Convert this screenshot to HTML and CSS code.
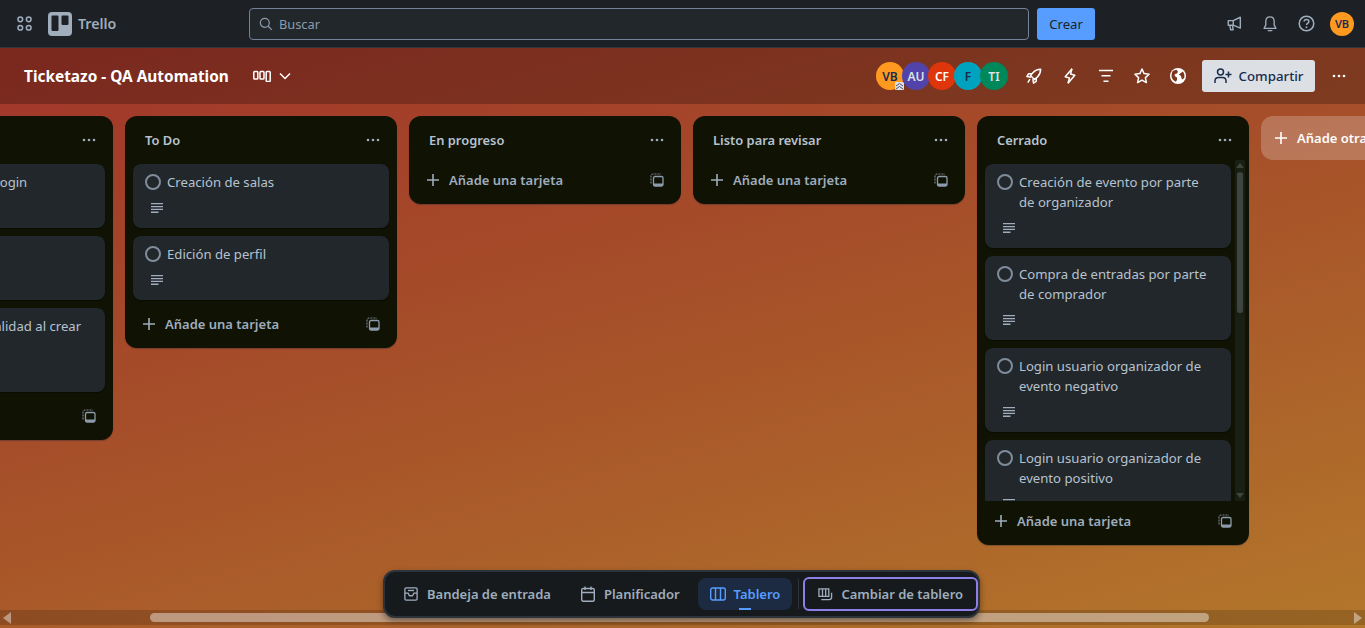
FILE: index.html
```html
<!DOCTYPE html>
<html lang="es">

<head>
    <meta charset="UTF-8">
    <meta name="viewport" content="width=device-width, initial-scale=1.0">
    <title>Ticketazo - QA Automation | Trello</title>
    <link rel="stylesheet" href="styles.css">
</head>

<body>
    <svg class="icon-defs" width="0" height="0" aria-hidden="true">
        <symbol id="i-desc" viewBox="0 0 12 10">
            <path d="M0 .6h12M0 3.6h12M0 6.4h12M0 9.2h7.500" fill="none" stroke="currentColor" stroke-width="1.400" />
        </symbol>
        <symbol id="i-dots" viewBox="0 0 14 4">
            <circle cx="2" cy="2" r="1.300" fill="currentColor" />
            <circle cx="7" cy="2" r="1.300" fill="currentColor" />
            <circle cx="12" cy="2" r="1.300" fill="currentColor" />
        </symbol>
        <symbol id="i-plus" viewBox="0 0 12 12">
            <path d="M6 0v12M0 6h12" fill="none" stroke="currentColor" stroke-width="1.600" />
        </symbol>
        <symbol id="i-template" viewBox="0 0 14 14">
            <path d="M1 10.500V3.200C1 2 1.800 1 3 1h8" fill="none" stroke="currentColor" stroke-width="1.200" stroke-dasharray="2 1" opacity=".8" />
            <rect x="3.500" y="3.500" width="9.500" height="9.500" rx="1.500" fill="none" stroke="currentColor" stroke-width="1.300" />
            <path d="M3.500 10.500h9.500v2.500h-9.500z" fill="currentColor" />
        </symbol>
    </svg>

    <header class="topbar">
        <div class="topbar-left">
            <button class="icon-btn">
                <svg width="15" height="15" viewBox="0 0 16 16" fill="none" stroke="currentColor" stroke-width="1.600">
                    <circle cx="3.500" cy="3.500" r="2.500" />
                    <circle cx="12.500" cy="3.500" r="2.500" />
                    <circle cx="3.500" cy="12.500" r="2.500" />
                    <circle cx="12.500" cy="12.500" r="2.500" />
                </svg>
            </button>
            <svg class="trello-mark" width="24" height="24" viewBox="0 0 24 24">
                <rect width="24" height="24" rx="4" fill="#9fadbc" />
                <rect x="3.500" y="3.500" width="7" height="15.500" rx="1.200" fill="#1d2125" />
                <rect x="13.500" y="3.500" width="7" height="9.500" rx="1.200" fill="#1d2125" />
            </svg>
            <span class="trello-name">Trello</span>
        </div>
        <div class="search">
            <svg width="14" height="14" viewBox="0 0 14 14" fill="none" stroke="currentColor" stroke-width="1.200">
                <circle cx="5.800" cy="5.800" r="4.500" />
                <path d="M9 9l3.800 3.800" />
            </svg>
            <span>Buscar</span>
        </div>
        <button class="create-btn">Crear</button>
        <div class="topbar-right">
            <button class="icon-btn">
                <svg width="15" height="15" viewBox="0 0 18 18" fill="none" stroke="currentColor" stroke-width="1.700" stroke-linejoin="round">
                    <path d="M1.500 5.500h6L16 1.500v13l-8.500-3.500h-6z" />
                    <path d="M3.500 11l.8 5.500h3L6.700 11" />
                    <path d="M7.500 5.500v5.500" />
                </svg>
            </button>
            <button class="icon-btn">
                <svg width="16" height="16" viewBox="0 0 18 18" fill="none" stroke="currentColor" stroke-width="1.500" stroke-linejoin="round">
                    <path d="M9 1c-3 0-4.700 2.300-4.700 5v4L2.300 14h13.400l-2-4V6c0-2.700-1.700-5-4.700-5z" />
                    <path d="M7 16.500h4" stroke-linecap="round" />
                </svg>
            </button>
            <button class="icon-btn">
                <svg width="17" height="17" viewBox="0 0 18 18" fill="none" stroke="currentColor" stroke-width="1.600">
                    <circle cx="9" cy="9" r="7.700" />
                    <path d="M6.500 7c0-1.500 1.100-2.300 2.500-2.300s2.500.8 2.500 2.200c0 1.900-2.500 1.800-2.500 3.600" />
                    <circle cx="9" cy="13" r="1" fill="currentColor" stroke="none" />
                </svg>
            </button>
            <div class="icon-btn">
                <span class="me-avatar">VB</span>
            </div>
        </div>
    </header>

    <div class="board">
        <div class="board-header">
            <h1 class="board-title">Ticketazo - QA Automation</h1>
            <svg class="view-icon" width="18" height="12" viewBox="0 0 18 12" fill="none" stroke="#fff" stroke-width="1.500">
                <rect x=".8" y="1.500" width="4" height="7.500" rx=".8" />
                <rect x="7" y="1.500" width="4" height="7.500" rx=".8" />
                <rect x="13.200" y="1.500" width="4" height="10" rx=".8" />
            </svg>
            <svg class="view-chevron" width="12" height="8" viewBox="0 0 12 8" fill="none" stroke="#fff" stroke-width="1.500">
                <path d="M1 1.500l5 5 5-5" />
            </svg>

            <div class="members">
                <span class="member member-vb">VB
                    <svg class="admin-badge" width="9" height="8" viewBox="0 0 9 8" fill="none" stroke="#44546f" stroke-width="1">
                        <rect width="9" height="8" rx="1" fill="#dfe1e6" stroke="none" />
                        <path d="M1 4l3.500-2.500L8 4M1 7l3.500-2.500L8 7" />
                    </svg>
                </span>
                <span class="member member-au">AU</span>
                <span class="member member-cf">CF</span>
                <span class="member member-f">F</span>
                <span class="member member-ti">TI</span>
            </div>

            <button class="icon-btn header-btn">
                <svg width="16" height="16" viewBox="0 0 18 18" fill="none" stroke="currentColor" stroke-width="1.700" stroke-linejoin="round">
                    <path d="M16.500 1.500c-4 .2-6.500 1.300-8.500 3.500L5 8.500l4.500 4.500 3.500-3c2.200-2 3.300-4.500 3.500-8.500z" />
                    <path d="M6.500 6.500H3L1 9.500l4.500.8" />
                    <path d="M11.500 11.500V15L8.500 17l-.8-4.500" />
                    <path d="M4.500 12.500L2 16.500" />
                </svg>
            </button>
            <button class="icon-btn header-btn">
                <svg width="12" height="16" viewBox="0 0 12 16" fill="none" stroke="currentColor" stroke-width="1.500" stroke-linejoin="round">
                    <path d="M8 .8L1.200 8.800l4.300 1.200L4 15.200" />
                    <path d="M4 15.200l6.800-8L6.500 6 8 .8" />
                </svg>
            </button>
            <button class="icon-btn header-btn">
                <svg width="16" height="14" viewBox="0 0 16 14" fill="none" stroke="currentColor" stroke-width="1.600">
                    <path d="M1 1.500h14M3.500 6.800h9M5.500 12.200h5" />
                </svg>
            </button>
            <button class="icon-btn header-btn">
                <svg width="18" height="18" viewBox="0 0 18 18" fill="none" stroke="currentColor" stroke-width="1.500" stroke-linejoin="round">
                    <path d="M9 2l2.100 4.600 5 .6-3.700 3.400 1 5L9 13.100l-4.400 2.500 1-5-3.700-3.400 5-.6z" />
                </svg>
            </button>
            <button class="icon-btn header-btn">
                <svg width="16" height="16" viewBox="0 0 16 16">
                    <circle cx="8" cy="8" r="8" fill="#fff" />
                    <path d="M3 2.800l3.500-1 1.500 2-1 1.800-2 .5-.4 2 2.400 1.400v2.500l-1.200 1.700C3.500 12.700 1.600 10.500 1.500 8 1.500 6 2 4.200 3 2.800zM10 5.500l3-2 1.200 2.500.3 3-1.500 2.500-1.500-1-.5-2.500-2-1.200z" fill="#7c3620" />
                </svg>
            </button>
            <button class="share-btn">
                <svg width="18" height="16" viewBox="0 0 18 16" fill="none" stroke="currentColor" stroke-width="1.500">
                    <circle cx="6.500" cy="4" r="3" />
                    <path d="M1 15v-2c0-2 1.500-3.500 3.500-3.500h4c2 0 3.500 1.500 3.500 3.500v2" />
                    <path d="M14.500 3.500v6M11.500 6.500h6" />
                </svg>
                Compartir
            </button>
            <button class="icon-btn header-btn">
                <svg width="14" height="4" fill="currentColor">
                    <use href="#i-dots" />
                </svg>
            </button>
        </div>

        <main class="canvas">
            <div class="lists">
                <section class="list">
                    <div class="list-head">
                        <h2>Backlog</h2>
                        <svg class="list-dots" width="14" height="4"><use href="#i-dots" /></svg>
                    </div>
                    <div class="cards">
                        <article class="card">
                            <div class="card-row"><span class="check"></span><p>Comprobación de login</p></div>
                            <div class="card-meta"><svg width="12" height="10"><use href="#i-desc" /></svg></div>
                        </article>
                        <article class="card">
                            <div class="card-row"><span class="check"></span><p>Logout</p></div>
                            <div class="card-meta"><svg width="12" height="10"><use href="#i-desc" /></svg></div>
                        </article>
                        <article class="card">
                            <div class="card-row"><span class="check"></span><p>Verificación de localidad al crear evento</p></div>
                            <div class="card-meta"><svg width="12" height="10"><use href="#i-desc" /></svg></div>
                        </article>
                    </div>
                    <div class="list-foot">
                        <svg class="foot-plus" width="12" height="12"><use href="#i-plus" /></svg>
                        <span>Añade una tarjeta</span>
                        <svg class="foot-template" width="14" height="14"><use href="#i-template" /></svg>
                    </div>
                </section>

                <section class="list">
                    <div class="list-head">
                        <h2>To Do</h2>
                        <svg class="list-dots" width="14" height="4"><use href="#i-dots" /></svg>
                    </div>
                    <div class="cards">
                        <article class="card">
                            <div class="card-row"><span class="check"></span><p>Creación de salas</p></div>
                            <div class="card-meta"><svg width="12" height="10"><use href="#i-desc" /></svg></div>
                        </article>
                        <article class="card">
                            <div class="card-row"><span class="check"></span><p>Edición de perfil</p></div>
                            <div class="card-meta"><svg width="12" height="10"><use href="#i-desc" /></svg></div>
                        </article>
                    </div>
                    <div class="list-foot">
                        <svg class="foot-plus" width="12" height="12"><use href="#i-plus" /></svg>
                        <span>Añade una tarjeta</span>
                        <svg class="foot-template" width="14" height="14"><use href="#i-template" /></svg>
                    </div>
                </section>

                <section class="list">
                    <div class="list-head">
                        <h2>En progreso</h2>
                        <svg class="list-dots" width="14" height="4"><use href="#i-dots" /></svg>
                    </div>
                    <div class="list-foot list-foot-tight">
                        <svg class="foot-plus" width="12" height="12"><use href="#i-plus" /></svg>
                        <span>Añade una tarjeta</span>
                        <svg class="foot-template" width="14" height="14"><use href="#i-template" /></svg>
                    </div>
                </section>

                <section class="list">
                    <div class="list-head">
                        <h2>Listo para revisar</h2>
                        <svg class="list-dots" width="14" height="4"><use href="#i-dots" /></svg>
                    </div>
                    <div class="list-foot list-foot-tight">
                        <svg class="foot-plus" width="12" height="12"><use href="#i-plus" /></svg>
                        <span>Añade una tarjeta</span>
                        <svg class="foot-template" width="14" height="14"><use href="#i-template" /></svg>
                    </div>
                </section>

                <section class="list">
                    <div class="list-head">
                        <h2>Cerrado</h2>
                        <svg class="list-dots" width="14" height="4"><use href="#i-dots" /></svg>
                    </div>
                    <div class="scroll-wrap">
                        <div class="cards cards-scroll">
                            <article class="card">
                                <div class="card-row"><span class="check"></span><p>Creación de evento por parte de organizador</p></div>
                                <div class="card-meta"><svg width="12" height="10"><use href="#i-desc" /></svg></div>
                            </article>
                            <article class="card">
                                <div class="card-row"><span class="check"></span><p>Compra de entradas por parte de comprador</p></div>
                                <div class="card-meta"><svg width="12" height="10"><use href="#i-desc" /></svg></div>
                            </article>
                            <article class="card">
                                <div class="card-row"><span class="check"></span><p>Login usuario organizador de evento negativo</p></div>
                                <div class="card-meta"><svg width="12" height="10"><use href="#i-desc" /></svg></div>
                            </article>
                            <article class="card">
                                <div class="card-row"><span class="check"></span><p>Login usuario organizador de evento positivo</p></div>
                                <div class="card-meta"><svg width="12" height="10"><use href="#i-desc" /></svg></div>
                            </article>
                        </div>
                        <div class="list-scrollbar">
                            <span class="arrow-up"></span>
                            <span class="list-thumb"></span>
                            <span class="arrow-down"></span>
                        </div>
                    </div>
                    <div class="list-foot list-foot-tight">
                        <svg class="foot-plus" width="12" height="12"><use href="#i-plus" /></svg>
                        <span>Añade una tarjeta</span>
                        <svg class="foot-template" width="14" height="14"><use href="#i-template" /></svg>
                    </div>
                </section>

                <div class="add-list">
                    <svg width="12" height="12"><use href="#i-plus" /></svg>
                    <span>Añade otra lista</span>
                </div>
            </div>

            <div class="page-scrollbar">
                <span class="arrow-left"></span>
                <span class="page-thumb"></span>
                <span class="arrow-right"></span>
            </div>

            <nav class="dock">
                <a class="dock-item">
                    <svg width="14" height="14" viewBox="0 0 16 16" fill="none" stroke="currentColor" stroke-width="1.500" stroke-linejoin="round">
                        <rect x="1" y="1" width="14" height="14" rx="1.500" />
                        <path d="M1 7h3.700l1.500 3h3.600l1.500-3H15" />
                        <path d="M4.500 4h7" />
                    </svg>
                    Bandeja de entrada
                </a>
                <a class="dock-item">
                    <svg width="14" height="16" viewBox="0 0 14 16" fill="none" stroke="currentColor" stroke-width="1.400">
                        <rect x=".7" y="2.500" width="12.600" height="12.800" rx="1.500" />
                        <path d="M.7 6.500h12.600M4 .5v3.500M10 .5v3.500" />
                    </svg>
                    Planificador
                </a>
                <a class="dock-item dock-active">
                    <svg width="16" height="14" viewBox="0 0 16 14" fill="none" stroke="currentColor" stroke-width="1.400">
                        <rect x=".7" y="1" width="14.600" height="12" rx="2" />
                        <path d="M5.500 1v12M10.500 1v12" />
                    </svg>
                    Tablero
                </a>
                <span class="dock-sep"></span>
                <a class="dock-item dock-switch">
                    <svg width="15" height="15" viewBox="0 0 16 16" fill="none" stroke="currentColor" stroke-width="1.400">
                        <path d="M1 2h10.500v8H1zM4.800 2v8M8.200 2v8" />
                        <path d="M14.500 6v5c0 1.500-1 2.500-2.500 2.500H3.500" />
                    </svg>
                    Cambiar de tablero
                </a>
            </nav>
        </main>
    </div>
</body>

</html>
```
FILE: styles.css
```css
* {
    box-sizing: border-box;
}

html,
body {
    height: 100%;
}

body {
    margin: 0;
    display: flex;
    flex-direction: column;
    overflow: hidden;
    font-family: "Noto Sans", "Open Sans", sans-serif;
    font-size: 13.15px;
    color: #b6c2cf;
    background-color: #1d2125;
}

h1,
h2,
p {
    margin: 0;
}

button {
    font-family: inherit;
    border: none;
    cursor: pointer;
}

.icon-defs {
    position: absolute;
}

.icon-btn {
    flex: 0 0 32px;
    height: 32px;
    padding: 0;
    display: flex;
    align-items: center;
    justify-content: center;
    background: none;
    color: #9fadbc;
}

/* top bar */
.topbar {
    flex: 0 0 48px;
    display: flex;
    align-items: center;
    padding: 0 7px 0 8px;
    background-color: #1d2125;
    border-bottom: 1px solid #31383d;
}

.topbar-left {
    flex: 0 0 241px;
    display: flex;
    align-items: center;
}

.trello-mark {
    margin-left: 8px;
}

.trello-name {
    margin-left: 6px;
    font-size: 14.2px;
    font-weight: 600;
    color: #9fadbc;
}

.search {
    flex: 1;
    height: 32px;
    display: flex;
    align-items: center;
    gap: 6px;
    padding: 1px 9px 0;
    font-size: 12.8px;
    color: #8c9bab;
    background-color: #22272b;
    border: 1px solid #738496;
    border-radius: 4px;
}

.create-btn {
    flex: 0 0 58px;
    height: 32px;
    margin-left: 8px;
    font-size: 13.15px;
    color: #1d2125;
    background-color: #579dff;
    border-radius: 3px;
}

.topbar-right {
    display: flex;
    align-items: center;
    gap: 4px;
    margin-left: 123px;
}

.me-avatar {
    width: 24px;
    height: 24px;
    display: flex;
    align-items: center;
    justify-content: center;
    font-size: 11px;
    font-weight: 600;
    color: #172b4d;
    background-color: #ff991f;
    border-radius: 50%;
}

/* board */
.board {
    flex: 1;
    min-height: 0;
    display: flex;
    flex-direction: column;
    background: linear-gradient(165deg, #a2352a 0%, #a64f29 45%, #b3772b 100%);
}

.board-header {
    flex: 0 0 56px;
    display: flex;
    align-items: center;
    gap: 4px;
    padding: 0 10px 0 24px;
    background-color: rgba(0, 0, 0, 0.24);
}

.board-title {
    font-size: 15.4px;
    font-weight: 700;
    color: #fff;
}

.view-icon {
    margin-left: 20px;
}

.view-chevron {
    margin-left: 4px;
}

.members {
    display: flex;
    margin-left: auto;
    margin-right: 6px;
}

.member {
    position: relative;
    width: 28px;
    height: 28px;
    margin-left: -2px;
    display: flex;
    align-items: center;
    justify-content: center;
    font-size: 12px;
    font-weight: 600;
    border-radius: 50%;
}

.member-vb {
    color: #172b4d;
    background-color: #ff991f;
}

.member-au {
    color: #dfe1e6;
    background-color: #5243aa;
}

.member-cf {
    color: #fff;
    background-color: #de350b;
}

.member-f {
    color: #172b4d;
    background-color: #00a3bf;
}

.member-ti {
    color: #dfe1e6;
    background-color: #00875a;
}

.admin-badge {
    position: absolute;
    right: 0;
    bottom: 0;
}

.header-btn {
    color: #fff;
}

.share-btn {
    flex: 0 0 113px;
    height: 32px;
    margin: 0 4px;
    display: flex;
    align-items: center;
    justify-content: center;
    gap: 7px;
    font-size: 13.3px;
    font-weight: 500;
    color: #172b4d;
    background-color: #dcdfe4;
    border-radius: 3px;
}

/* lists */
.canvas {
    position: relative;
    flex: 1;
    min-height: 0;
    display: flex;
    flex-direction: column;
    overflow: hidden;
}

.lists {
    flex: 1;
    min-height: 0;
    display: flex;
    align-items: flex-start;
    gap: 12px;
    margin-top: 12px;
    margin-left: -159px;
}

.list {
    flex: 0 0 272px;
    padding-bottom: 8px;
    background-color: #101204;
    border-radius: 12px;
    box-shadow: 0 1px 1px rgba(9, 30, 66, 0.3);
}

.list-head {
    height: 44px;
    display: flex;
    align-items: center;
    justify-content: space-between;
    padding: 4px 17px 0 20px;
}

.list-head h2 {
    font-size: 12.9px;
    font-weight: 600;
    color: #b6c2cf;
}

.list-dots {
    color: #9fadbc;
}

.cards {
    display: flex;
    flex-direction: column;
    gap: 8px;
    padding: 4px 8px 0;
}

.card {
    flex: 0 0 auto;
    padding: 8px 12px;
    background-color: #22272b;
    border-radius: 8px;
    box-shadow: 0 1px 1px rgba(0, 0, 0, 0.4);
}

.card-row {
    display: flex;
    gap: 6px;
    line-height: 20px;
}

.card-row p {
    padding-right: 4px;
}

.check {
    flex: 0 0 16px;
    height: 16px;
    margin-top: 2px;
    border: 2px solid #7f8c9a;
    border-radius: 50%;
}

.card-meta {
    height: 24px;
    margin-top: 4px;
    padding-left: 6px;
    display: flex;
    align-items: center;
    color: #9fadbc;
}

.list-foot {
    height: 32px;
    margin-top: 8px;
    display: flex;
    align-items: center;
    padding: 0 17px 0 18px;
    font-size: 13px;
    font-weight: 600;
    color: #9fadbc;
}

.list-foot-tight {
    margin-top: 4px;
}

.foot-plus {
    margin-right: 10px;
}

.foot-template {
    margin-left: auto;
    color: #8c9bab;
}

/* scrollbars */
.scroll-wrap {
    height: 341px;
    display: flex;
    overflow: hidden;
}

.cards-scroll {
    flex: 0 0 254px;
    padding-right: 0;
    overflow: hidden;
}

.list-scrollbar {
    width: 10px;
    margin-left: 4px;
    position: relative;
    display: flex;
    flex-direction: column;
    align-items: center;
    background-color: #1a1f14;
}

.arrow-up {
    margin-top: 3px;
    border: 4px solid transparent;
    border-top: 0;
    border-bottom: 5px solid #3c463f;
}

.list-thumb {
    width: 6px;
    height: 141px;
    margin-top: 4px;
    background-color: #3c463f;
    border-radius: 3px;
}

.arrow-down {
    margin-top: auto;
    margin-bottom: 3px;
    border: 4px solid transparent;
    border-bottom: 0;
    border-top: 5px solid #3c463f;
}

.page-scrollbar {
    flex: 0 0 15px;
    margin-bottom: 3px;
    display: flex;
    align-items: center;
    padding: 0 3px;
    background-color: rgba(0, 0, 0, 0.16);
}

.arrow-left {
    border: 6px solid transparent;
    border-left: 0;
    border-right: 8px solid rgba(255, 255, 255, 0.42);
}

.page-thumb {
    width: 1059px;
    height: 9px;
    margin-left: 139px;
    background-color: rgba(255, 255, 255, 0.42);
    border-radius: 5px;
}

.arrow-right {
    margin-left: auto;
    border: 6px solid transparent;
    border-right: 0;
    border-left: 8px solid rgba(255, 255, 255, 0.42);
}

.add-list {
    flex: 0 0 272px;
    height: 44px;
    display: flex;
    align-items: center;
    gap: 10px;
    padding-left: 14px;
    font-size: 13px;
    font-weight: 600;
    color: #fff;
    background-color: rgba(255, 255, 255, 0.22);
    border-radius: 12px;
}

/* bottom dock, floats over the board */
.dock {
    position: absolute;
    left: 383px;
    bottom: 10px;
    height: 48px;
    display: flex;
    align-items: center;
    gap: 6px;
    padding: 0 0 0 7px;
    background-color: #161a1d;
    border: 2px solid #2c333a;
    border-radius: 12px;
    box-shadow: 0 3px 6px rgba(0, 0, 0, 0.4);
}

.dock-item {
    position: relative;
    height: 32px;
    display: flex;
    align-items: center;
    gap: 9px;
    padding: 0 12px;
    font-size: 13px;
    font-weight: 600;
    color: #9fadbc;
    border-radius: 8px;
}

.dock-active {
    gap: 8px;
    color: #579dff;
    background-color: #1c2b41;
}

.dock-active::after {
    content: "";
    position: absolute;
    left: 41px;
    bottom: 0;
    width: 12px;
    height: 2px;
    background-color: #579dff;
}

.dock-sep {
    width: 1px;
    height: 30px;
    margin-right: -2px;
    background-color: #2c333a;
}

.dock-switch {
    height: 34px;
    gap: 8px;
    padding: 0 13px;
    border: 2px solid #8f7ee7;
    border-radius: 6px;
}
```
